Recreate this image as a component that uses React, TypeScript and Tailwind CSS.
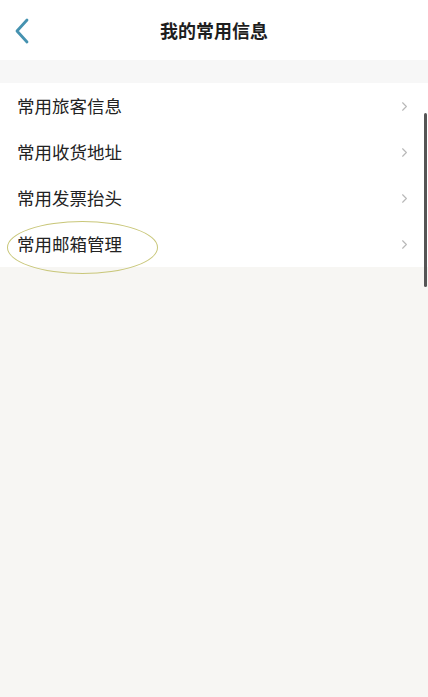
import { ChevronRight } from 'lucide-react'

const items = ['常用旅客信息', '常用收货地址', '常用发票抬头', '常用邮箱管理']

export default function App() {
  return (
    <div
      className="relative flex h-[697px] w-[428px] flex-col overflow-hidden bg-[#f7f6f3] text-[#222]"
      style={{ fontFamily: '"Noto Sans CJK SC", "Noto Sans", sans-serif' }}
    >
      <header className="relative flex h-[60px] shrink-0 items-center justify-center bg-white">
        <svg className="absolute left-[12px] top-[17px] h-[28px] w-[20px]" viewBox="0 0 20 28" fill="none">
          <path d="M15 3 L5 14 L15 25" stroke="#4592b0" strokeWidth="2.8" strokeLinecap="round" strokeLinejoin="round" />
        </svg>
        <h1 className="text-[18px] font-bold text-[#1e1e1e]">我的常用信息</h1>
      </header>
      <div className="h-[23px] shrink-0 bg-[#f7f7f7]" />
      <ul className="shrink-0 bg-white">
        {items.map((item) => (
          <li key={item} className="flex h-[46px] items-center justify-between pl-[17px] pr-[16px]">
            <span className="text-[17.5px] text-[#222]">{item}</span>
            <ChevronRight className="h-[15px] w-[15px] text-[#b8b8b8]" strokeWidth={1.8} />
          </li>
        ))}
      </ul>

      {/* hand-drawn circle around the last row */}
      <div className="absolute left-[7px] top-[221px] h-[53px] w-[151px] rounded-[50%] border-[1.5px] border-[#c9c77a]" />
      {/* scroll indicator */}
      <div className="absolute right-[1px] top-[113px] h-[174px] w-[3px] rounded-full bg-[#555]" />
    </div>
  )
}
